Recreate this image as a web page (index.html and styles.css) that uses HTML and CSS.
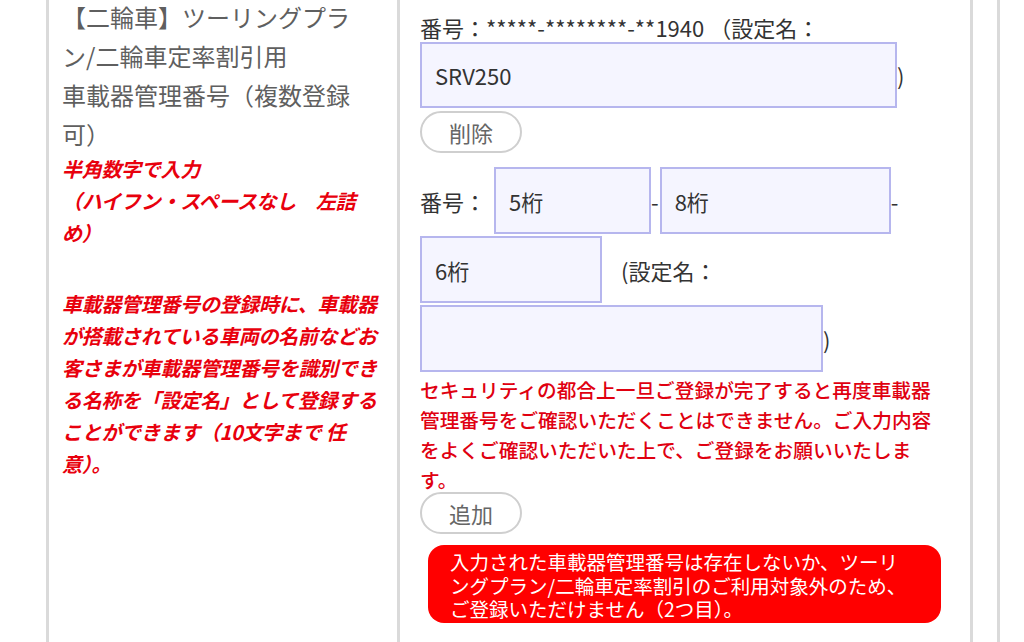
FILE: index.html
```html
<!DOCTYPE html>
<html lang="ja">
	<head>
		<title>車載器管理番号</title>
		<meta charset="UTF-8">
		<meta name="viewport" content="width=device-width, initial-scale=1">
		<link rel="stylesheet" href="styles.css">
	</head>
	<body>
		<div class="frame">
			<div class="label-cell">
				<div class="title">【二輪車】ツーリングプラ<br>ン/二輪車定率割引用<br>車載器管理番号（複数登録<br>可）</div>
				<div class="hint">半角数字で入力<br>（ハイフン・スペースなし　左詰<br>め）</div>
				<div class="hint hint-gap">車載器管理番号の登録時に、車載器<br>が搭載されている車両の名前などお<br>客さまが車載器管理番号を識別でき<br>る名称を「設定名」として登録する<br>ことができます（10文字まで 任<br>意）。</div>
			</div>
			<div class="field-cell">
				<div class="line">番号：*****-********-**1940 （設定名：</div>
				<div class="row">
					<input class="box box-name" type="text" value="SRV250">
					<span class="sep">)</span>
				</div>
				<button class="pill pill-del" type="button">削除</button>
				<div class="row row-first">
					<span class="lbl">番号：</span>
					<input class="box box-5" type="text" placeholder="5桁">
					<span class="sep">-</span>
					<input class="box box-8" type="text" placeholder="8桁">
					<span class="sep">-</span>
				</div>
				<div class="row row-next">
					<input class="box box-6" type="text" placeholder="6桁">
					<span class="lbl lbl-name">(設定名：</span>
				</div>
				<div class="row row-next">
					<input class="box box-name2" type="text">
					<span class="sep">)</span>
				</div>
				<div class="notice">セキュリティの都合上一旦ご登録が完了すると再度車載器<br>管理番号をご確認いただくことはできません。ご入力内容<br>をよくご確認いただいた上で、ご登録をお願いいたしま<br>す。</div>
				<button class="pill pill-add" type="button">追加</button>
				<div class="error">入力された車載器管理番号は存在しないか、ツーリ<br>ングプラン/二輪車定率割引のご利用対象外のため、<br>ご登録いただけません（2つ目）。</div>
			</div>
		</div>
	</body>
</html>
```

FILE: styles.css
```css
body {
	margin: 0;
	background: #fff;
	font-family: "Noto Sans CJK JP", "Noto Sans", sans-serif;
	overflow: hidden;
}
.frame {
	display: flex;
	box-sizing: border-box;
	width: 954px;
	height: 642px;
	margin-left: 46px;
	border-left: 3px solid #dadada;
	border-right: 3px solid #dadada;
}
.label-cell {
	box-sizing: border-box;
	width: 351px;
	padding-left: 13px;
	border-right: 3px solid #dadada;
	white-space: nowrap;
}
.field-cell {
	box-sizing: border-box;
	width: 573px;
	padding: 12px 0 0 20px;
	border-right: 3px solid #dadada;
	color: #333;
	white-space: nowrap;
}
.title {
	margin-top: -3px;
	font-size: 24px;
	line-height: 39px;
	color: #5f5f5f;
}
.hint {
	font-size: 20px;
	line-height: 32px;
	font-weight: bold;
	font-style: italic;
	color: #e8000d;
	letter-spacing: -0.3px;
}
.hint-gap {
	margin-top: 39px;
}
.line {
	font-size: 22px;
	line-height: 30px;
}
.row {
	display: flex;
	align-items: center;
	font-size: 22px;
}
.row-first {
	margin-top: 14px;
}
.row-next {
	margin-top: 2px;
}
.box {
	box-sizing: border-box;
	height: 67px;
	margin: 0;
	padding: 0 0 0 13px;
	border: 2px solid #b6b6ee;
	background: #f5f5ff;
	font-family: inherit;
	font-size: 22px;
	color: #333;
	outline: none;
}
.box::placeholder {
	color: #333;
	opacity: 1;
}
.box-name {
	width: 477px;
	height: 66px;
}
.box-5 {
	width: 157px;
}
.box-8 {
	width: 231px;
}
.box-6 {
	width: 182px;
}
.box-name2 {
	width: 403px;
}
.sep {
	padding: 0 1px 0 0;
}
.lbl {
	margin-right: 8px;
}
.lbl-name {
	margin-left: 19px;
}
.pill {
	display: block;
	box-sizing: border-box;
	width: 102px;
	height: 42px;
	padding: 0;
	border: 2px solid #cfcfcf;
	border-radius: 21px;
	background: #fff;
	font-family: inherit;
	font-size: 22px;
	color: #666;
}
.pill-del {
	margin-top: 3px;
}
.pill-add {
	margin-top: -3px;
}
.notice {
	margin-top: 3px;
	font-size: 19.7px;
	line-height: 30px;
	font-weight: 500;
	color: #e00010;
}
.error {
	box-sizing: border-box;
	width: 513px;
	height: 78px;
	margin: 11px 0 0 8px;
	padding: 5px 0 0 22px;
	border-radius: 16px;
	background: #ff0000;
	color: #fff;
	font-size: 19.5px;
	line-height: 23.5px;
}
```
